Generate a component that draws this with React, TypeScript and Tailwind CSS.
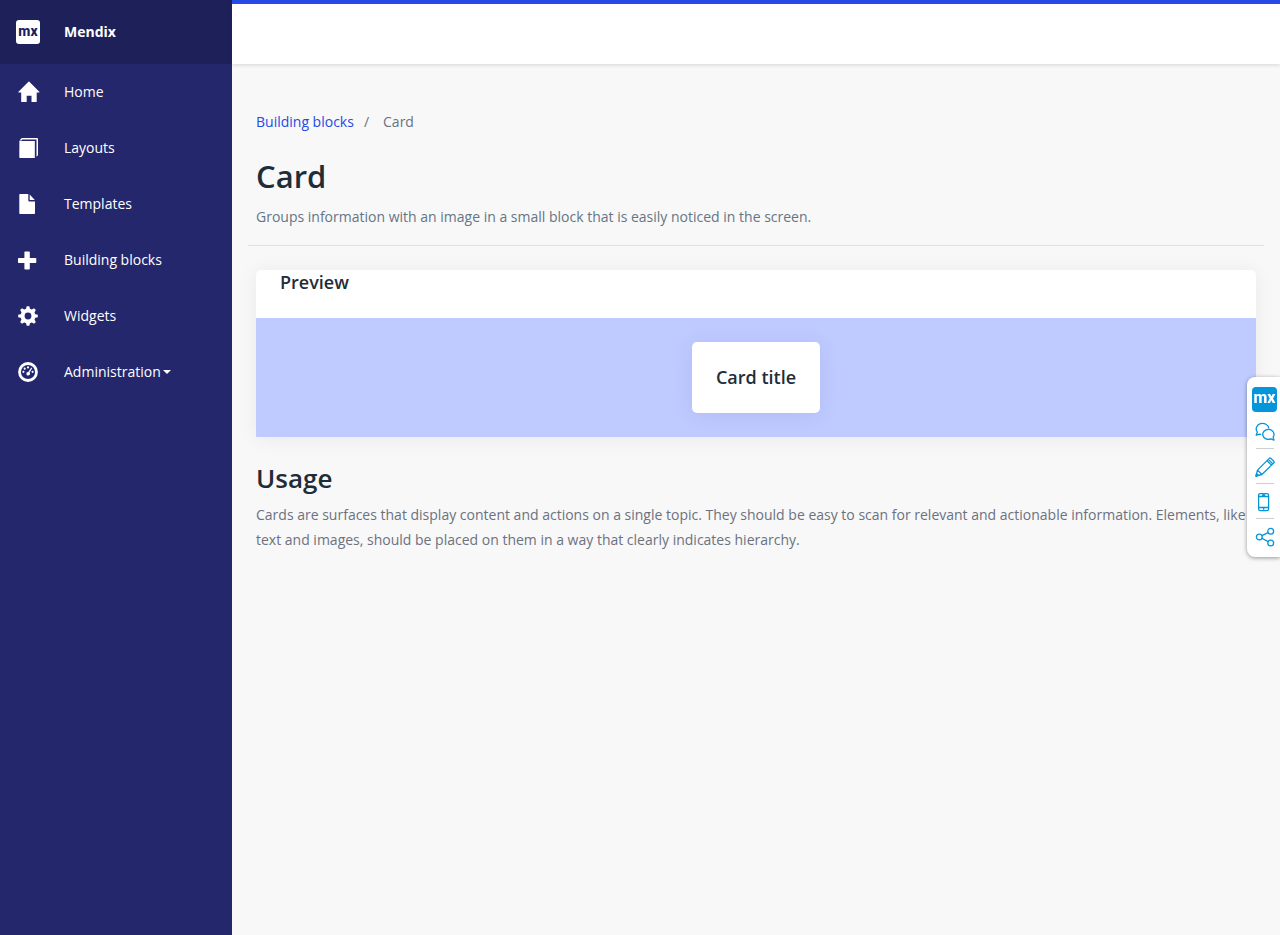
import type { ReactNode } from "react";

const HomeIcon = () => (
  <svg width="24" height="24" viewBox="0 0 24 24" fill="currentColor" aria-hidden="true">
    <path d="M13.100 1.500 23.300 11.700c.3.300.2.700-.2.700H20.700V21.500q0 .5-.5.5H15.500v-6.300h-4.800V22H5.700q-.5 0-.5-.5v-9.100H2.700c-.4 0-.5-.4-.2-.7L12.700 1.500q.2-.2.400 0Z" />
  </svg>
);

const LayoutsIcon = () => (
  <svg width="24" height="24" viewBox="0 0 24 24" fill="currentColor" aria-hidden="true">
    <path d="M3.400 5h15.400v17H4.100a.8.800 0 0 1-.8-.8Z" />
    <path d="M3.400 4.400 5.800 2h15.200a1 1 0 0 1 1 1V19.200L20.500 20.700V3.500H6.300L5.400 4.400Z" />
  </svg>
);

const TemplatesIcon = () => (
  <svg width="24" height="24" viewBox="0 0 24 24" fill="currentColor" aria-hidden="true">
    <path d="M4 2h8.300v6.200a1.200 1.200 0 0 0 1.200 1.200H19V21.300a.7.700 0 0 1-.7.700H4a.7.700 0 0 1-.7-.7V2.700A.7.700 0 0 1 4 2Z" />
    <path d="M13.700 2.500 18.800 8h-4.500a.6.600 0 0 1-.6-.6Z" />
  </svg>
);

const PlusIcon = () => (
  <svg width="24" height="24" viewBox="0 0 24 24" fill="currentColor" aria-hidden="true">
    <path d="M9.200 3.500h3.800q.8 0 .8.800v5.700h5.700q.8 0 .8.800v3.400q0 .8-.8.800h-5.700v5.700q0 .8-.8.800H9.200q-.8 0-.8-.8v-5.700H2.800q-.8 0-.8-.8v-3.400q0-.8.800-.8h5.600V4.300q0-.8.800-.8Z" />
  </svg>
);

const teeth = [0, 45, 90, 135, 180, 225, 270, 315];

const GearIcon = () => (
  <svg width="24" height="24" viewBox="0 0 24 24" fill="currentColor" aria-hidden="true">
    <circle cx="12" cy="12" r="5.400" fill="none" stroke="currentColor" strokeWidth="4" />
    {teeth.map((angle) => (
      <path key={angle} d="M9.900 5.500 10.700 2.200h2.600L14.100 5.500Z" transform={`rotate(${angle} 12 12)`} />
    ))}
  </svg>
);

const DashboardIcon = () => (
  <svg width="24" height="24" viewBox="0 0 24 24" fill="currentColor" aria-hidden="true">
    <circle cx="12" cy="12" r="8.500" fill="none" stroke="currentColor" strokeWidth="2.800" />
    <circle cx="7.400" cy="11.800" r="1.100" />
    <circle cx="8.700" cy="8.700" r="1.100" />
    <circle cx="12" cy="7.400" r="1.100" />
    <circle cx="16.600" cy="11.800" r="1.100" />
    <path d="m15.300 7.600.9.600-2.600 4.400a1.800 1.800 0 1 1-1.300-.7Z" />
  </svg>
);

const ChatIcon = () => (
  <svg width="20" height="20" viewBox="0 0 20 20" fill="none" stroke="currentColor" strokeWidth="1.300" strokeLinejoin="round" aria-hidden="true">
    <path d="M6.200 12.500 4.800 12.100 1.200 13.100 2.400 10.100A6.300 5.500 0 1 1 13.800 6.500" />
    <path d="M13.400 7.400a5.600 5 0 0 1 4.700 7.700l.9 3-3.200-1.200a5.600 5 0 1 1-2.400-9.500Z" />
  </svg>
);

const PencilIcon = () => (
  <svg width="20" height="20" viewBox="0 0 20 20" fill="none" stroke="currentColor" strokeWidth="1.300" strokeLinejoin="round" aria-hidden="true">
    <path d="m1 19 1.500-5.900L14.300 1.400q.8-.8 1.600 0l2.900 2.900q.8.800 0 1.600L6.900 17.500ZM2.500 13.100l4.400 4.400M12 3.700 16.400 8.100M13.300 2.400l4.400 4.400" />
    <path d="m1 19 .6-2.400 1.800 1.800Z" fill="currentColor" />
  </svg>
);

const PhoneIcon = () => (
  <svg width="20" height="20" viewBox="0 0 20 20" fill="none" stroke="currentColor" strokeWidth="1.300" aria-hidden="true">
    <rect x="3.600" y="1.600" width="10" height="17" rx="1.600" />
    <path d="M3.600 4.500h10M3.600 15.500h10M7 3h3.200M8 17h1.300" />
  </svg>
);

const ShareIcon = () => (
  <svg width="20" height="20" viewBox="0 0 20 20" fill="none" stroke="currentColor" strokeWidth="1.300" aria-hidden="true">
    <circle cx="4.300" cy="10" r="2.900" />
    <circle cx="15.700" cy="4.200" r="2.900" />
    <circle cx="15.700" cy="16" r="2.900" />
    <path d="m6.900 8.700 6.200-3.100M6.900 11.300l6.200 3.300" />
  </svg>
);

const navItems: { label: string; icon: ReactNode; menu?: boolean }[] = [
  { label: "Home", icon: <HomeIcon /> },
  { label: "Layouts", icon: <LayoutsIcon /> },
  { label: "Templates", icon: <TemplatesIcon /> },
  { label: "Building blocks", icon: <PlusIcon /> },
  { label: "Widgets", icon: <GearIcon /> },
  { label: "Administration", icon: <DashboardIcon />, menu: true },
];

const tools: { label: string; icon: ReactNode }[] = [
  { label: "Feedback", icon: <ChatIcon /> },
  { label: "Edit", icon: <PencilIcon /> },
  { label: "View on device", icon: <PhoneIcon /> },
  { label: "Share", icon: <ShareIcon /> },
];

function Sidebar() {
  return (
    <aside className="w-58 shrink-0 bg-[#24276c] text-white">
      <div className="flex h-16 items-center gap-6 bg-[#1e205a] px-4">
        <span className="flex h-6 w-6 items-center justify-center rounded-[3px] bg-white pb-0.5 font-[Roboto,sans-serif] text-[14px] leading-5 font-extrabold text-[#1e205a]">
          mx
        </span>
        <span className="font-bold">Mendix</span>
      </div>
      <nav>
        <ul>
          {navItems.map((item) => (
            <li key={item.label}>
              <a href="#" className="flex h-14 items-center gap-6 px-4">
                {item.icon}
                <span className="flex items-center gap-0.5">
                  {item.label}
                  {item.menu && (
                    <svg width="8" height="4" viewBox="0 0 8 4" fill="currentColor" aria-hidden="true">
                      <path d="M0 0h8L4 4Z" />
                    </svg>
                  )}
                </span>
              </a>
            </li>
          ))}
        </ul>
      </nav>
    </aside>
  );
}

function Toolbar() {
  return (
    <div className="fixed top-1/2 right-0 -mt-[91px] flex w-[33px] flex-col items-center rounded-l-lg bg-white pt-[10px] pb-1 pl-0.5 text-[#0595db] shadow-[0_1px_4px_rgba(0,0,0,0.4)]">
      <button
        type="button"
        aria-label="Mendix"
        className="mb-0.5 flex h-[25px] w-[25px] items-center justify-center rounded-[4px] bg-[#0595db] pb-0.5 font-[Roboto,sans-serif] text-[16px] leading-5 font-extrabold text-white"
      >
        mx
      </button>
      {tools.map((tool, i) => (
        <div key={tool.label} className="flex flex-col items-center">
          {i > 0 && <div className="h-px w-[18px] bg-[#cfcfcf]" />}
          <button type="button" aria-label={tool.label} className="flex h-[34px] items-center justify-center pt-0.5">
            {tool.icon}
          </button>
        </div>
      ))}
    </div>
  );
}

export default function App() {
  return (
    <div className="flex min-h-screen bg-[#f8f8f8] font-['Open_Sans',sans-serif] text-[14px] leading-5 text-[#6c7180]">
      <Sidebar />
      <div className="min-w-0 flex-1">
        <header className="h-16 border-t-4 border-[#264ae5] bg-white shadow-[0_1px_4px_rgba(0,0,0,0.14)]" />
        <main className="px-4 pt-12">
          <div className="px-2">
            <nav aria-label="Breadcrumb">
              <ol className="flex">
                <li>
                  <a href="#" className="text-[#264ae5]">
                    Building blocks
                  </a>
                </li>
                <li className="pr-[14px] pl-[10px]">/</li>
                <li aria-current="page">Card</li>
              </ol>
            </nav>
            <h1 className="mt-6 text-[31px] leading-10 font-semibold text-[#1f2d38]">Card</h1>
            <p className="mt-[11px] text-[#657584]">
              Groups information with an image in a small block that is easily noticed in the screen.
            </p>
          </div>
          <hr className="mt-[18px] border-[#dfe2e5]" />
          <div className="px-2 pt-6">
            <section className="rounded-[5px] bg-white shadow-[0_2px_20px_1px_rgba(5,15,30,0.06)]">
              <h2 className="h-12 px-6 text-[18px] leading-6 font-semibold text-[#1f2d38]">Preview</h2>
              <div className="flex justify-center bg-[#bfcbff] p-6">
                <div className="rounded-[5px] bg-white p-6 text-[18px] leading-[23px] font-semibold text-[#1f2d38] shadow-[0_2px_20px_1px_rgba(5,15,129,0.08)]">
                  Card title
                </div>
              </div>
            </section>
            <h2 className="mt-6 text-[26px] leading-[34px] font-semibold text-[#1f2d38]">Usage</h2>
            <p className="mt-[7px] leading-[25px]">
              Cards are surfaces that display content and actions on a single topic. They should be easy to scan for
              relevant and actionable information. Elements, like text and images, should be placed on them in a way
              that clearly indicates hierarchy.
            </p>
          </div>
        </main>
      </div>
      <Toolbar />
    </div>
  );
}
